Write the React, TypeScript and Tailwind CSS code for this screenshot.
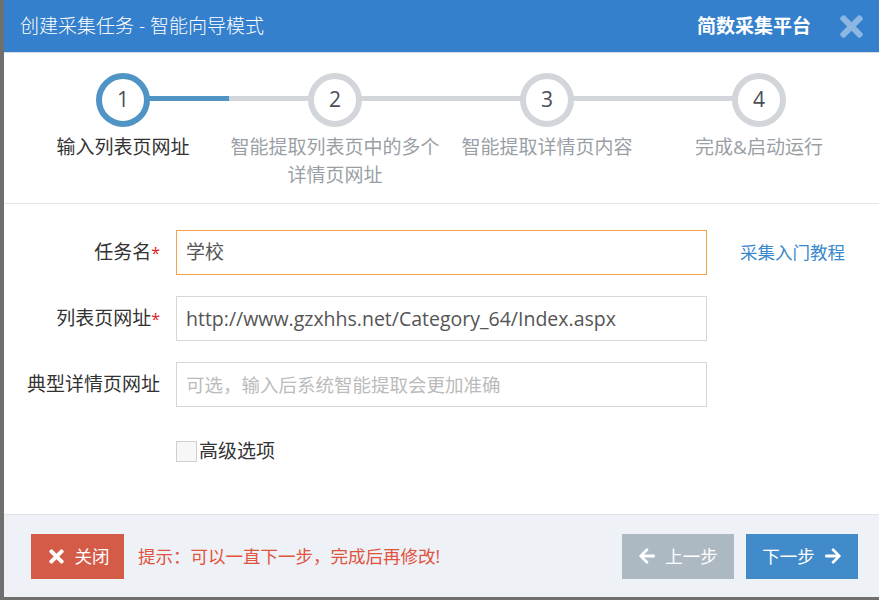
import { FaTimes, FaArrowLeft, FaArrowRight } from "react-icons/fa";

const font = { fontFamily: "'Open Sans', 'Noto Sans CJK SC', sans-serif" };

const steps = [
  { n: "1", label: "输入列表页网址" },
  { n: "2", label: "智能提取列表页中的多个详情页网址" },
  { n: "3", label: "智能提取详情页内容" },
  { n: "4", label: "完成&启动运行" },
];

const App = () => {
  return (
    <div className="w-[879px] h-[600px] bg-[#6f6f6f] pl-[4px] overflow-hidden" style={font}>
      <div className="h-[597px] bg-white flex flex-col">
        {/* Header */}
        <div className="h-[53px] bg-[#3580cc] border-b border-[#d6dde6] flex items-center pl-[16px] pr-[11px] text-white">
          <span className="text-[19px] leading-none font-light">创建采集任务 - 智能向导模式</span>
          <span className="ml-auto text-[19px] font-bold leading-none">简数采集平台</span>
          <FaTimes className="ml-[24px] text-[#8db6e2]" size={33} />
        </div>

        {/* Steps */}
        <div className="grid grid-cols-4 pl-[13px] pr-[14px] pt-[20px] pb-[14px] border-b border-[#e6e6e6]">
          {steps.map((s, i) => (
            <div key={s.n} className="flex flex-col items-center">
              <div className="relative w-full h-[54px] flex justify-center">
                {i > 0 && (
                  <div className="absolute left-0 top-[23px] w-1/2 h-[5px] bg-[#d2d5d9]" />
                )}
                {i < steps.length - 1 && (
                  <div
                    className={
                      i === 0
                        ? "absolute right-0 top-[23px] w-1/2 h-[5px] bg-[#5094c6]"
                        : "absolute right-0 top-[23px] w-1/2 h-[5px] bg-[#d2d5d9]"
                    }
                  />
                )}
                <div
                  className={
                    i === 0
                      ? "relative z-10 w-[54px] h-[54px] rounded-full border-[6px] border-[#5094c6] bg-white flex items-center justify-center text-[21px] text-[#4a4f57]"
                      : "relative z-10 w-[54px] h-[54px] rounded-full border-[6px] border-[#d2d5d9] bg-white flex items-center justify-center text-[21px] text-[#4a4f57]"
                  }
                >
                  {s.n}
                </div>
              </div>
              <div
                className={
                  i === 0
                    ? "mt-[6px] text-center text-[19px] leading-[28px] text-[#333] px-[1px]"
                    : "mt-[6px] text-center text-[19px] leading-[28px] text-[#9a9fa6] px-[1px]"
                }
              >
                {s.label}
              </div>
            </div>
          ))}
        </div>

        {/* Form */}
        <div className="flex-1 pt-[26px] flex flex-col">
          <div className="flex items-center">
            <label className="w-[156px] text-right text-[19px] text-[#333]">
              任务名<span className="text-[#e02020] text-[16px]">*</span>
            </label>
            <div className="ml-[16px] w-[531px] h-[45px] border border-[#f2a04a] flex items-center px-[9px] text-[19px] text-[#555]">
              学校
            </div>
            <a className="ml-[33px] text-[17.5px] text-[#3a88cc]">采集入门教程</a>
          </div>

          <div className="flex items-center mt-[21px]">
            <label className="w-[156px] text-right text-[19px] text-[#333]">
              列表页网址<span className="text-[#e02020] text-[16px]">*</span>
            </label>
            <div className="ml-[16px] w-[531px] h-[45px] border border-[#d6d6d6] flex items-center px-[9px] text-[19.5px] text-[#555]">
              http://www.gzxhhs.net/Category_64/Index.aspx
            </div>
          </div>

          <div className="flex items-center mt-[21px]">
            <label className="w-[156px] text-right text-[19px] text-[#333]">典型详情页网址</label>
            <div className="ml-[16px] w-[531px] h-[45px] border border-[#d6d6d6] flex items-center px-[9px] text-[18.5px] text-[#bbbbbb]">
              可选，输入后系统智能提取会更加准确
            </div>
          </div>

          <div className="flex items-center mt-[30px] ml-[172px]">
            <div className="w-[21px] h-[21px] border border-[#d0d0d0] bg-[#f7f7f7]" />
            <span className="ml-[2px] text-[19px] text-[#333]">高级选项</span>
          </div>
        </div>

        {/* Footer */}
        <div className="h-[83px] bg-[#eef1f6] border-t border-[#e0e4ea] flex items-center pl-[27px] pr-[21px]">
          <button className="w-[93px] h-[45px] bg-[#d35b47] text-white flex items-center justify-center gap-[8px] text-[17.5px]">
            <FaTimes size={21} />
            关闭
          </button>
          <span className="ml-[14px] text-[17.5px] text-[#e0533e]">提示：可以一直下一步，完成后再修改!</span>
          <div className="ml-auto flex gap-[12px]">
            <button className="w-[112px] h-[45px] bg-[#acb9c2] text-white flex items-center justify-center gap-[9px] text-[17.5px]">
              <FaArrowLeft size={18} />
              上一步
            </button>
            <button className="w-[112px] h-[45px] bg-[#428bca] text-white flex items-center justify-center gap-[9px] text-[17.5px]">
              下一步
              <FaArrowRight size={18} />
            </button>
          </div>
        </div>
      </div>
    </div>
  );
};

export default App;
